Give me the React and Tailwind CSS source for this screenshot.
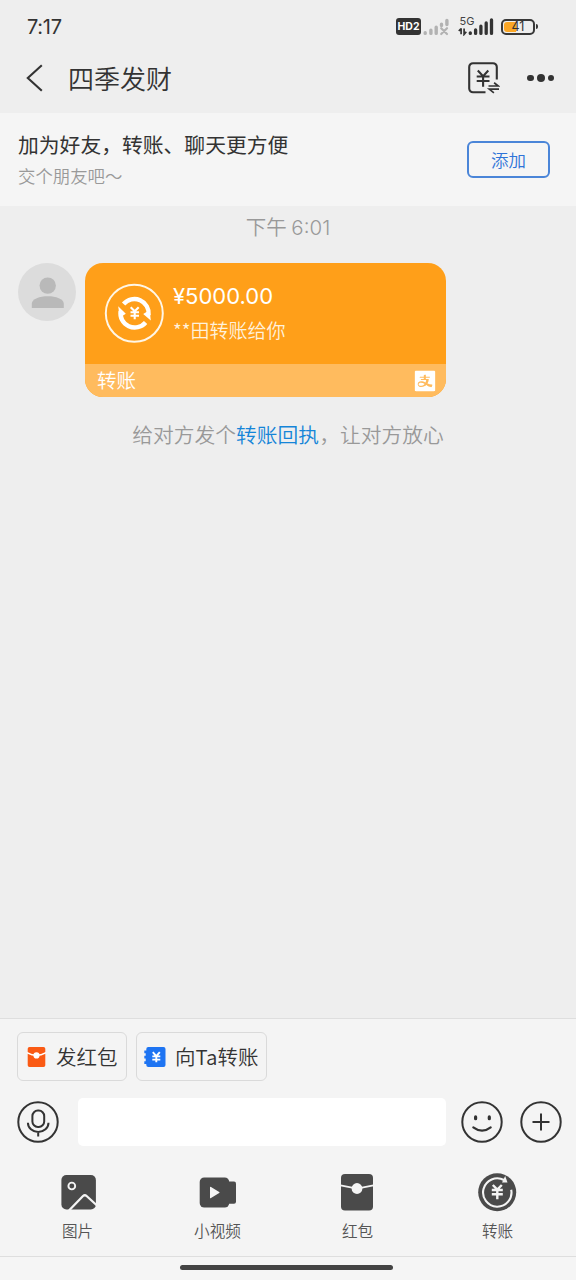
import { AiFillAlipaySquare } from 'react-icons/ai';

const QUICK_ACTIONS = [
  { key: 'redPacket', label: '发红包', icon: <RedPacketSmallIcon />, className: 'w-[110px] pl-[9px] gap-[10px]' },
  { key: 'transfer', label: '向Ta转账', icon: <TransferSmallIcon />, className: 'w-[131px] pl-[7px] gap-[9px]' },
];

const TOOLS = [
  { key: 'photo', label: '图片', icon: <PhotoIcon /> },
  { key: 'video', label: '小视频', icon: <VideoIcon /> },
  { key: 'redPacket', label: '红包', icon: <RedPacketIcon /> },
  { key: 'transfer', label: '转账', icon: <TransferIcon /> },
];

function SimMutedIcon() {
  return (
    <svg width="28" height="18" viewBox="0 0 28 18" stroke="#b2b2b2" strokeWidth="3.4" strokeLinecap="round" fill="none">
      <path d="M3.2 15.4v-.6M8.9 15.400v-3.200M14.200 15.400v-6.200M19.500 7.600V6.200M24.900 6.500V2.400" />
      <path d="M19.200 10.200l5.800 5.800M25 10.200l-5.800 5.800" strokeWidth="2.200" />
    </svg>
  );
}

function SignalIcon() {
  return (
    <div className="relative w-9 h-[22px]">
      <span className="absolute left-[1.5px] top-0 text-[11px] leading-[11px] text-[#444]">5G</span>
      <svg className="absolute left-0 top-[2px]" width="36" height="18" viewBox="0 0 36 18" stroke="#333" fill="none">
        <path d="M12.3 15.4v-.6M17.6 15.4v-3.5M22.9 15.4V8.2M28.2 15.4V5M33.5 15.4V1.9" strokeWidth="3.3" strokeLinecap="round" />
        <path d="M3.1 10.3v6M.8 13l2.3-2.5M6.1 10.600v5.800l2.200-2.600" strokeWidth="1.700" />
      </svg>
    </div>
  );
}

function Battery() {
  return (
    <div className="flex items-center gap-px">
      <div className="relative w-[34px] h-4 rounded-[5px] border-2 border-[#383838] p-px">
        <div className="w-[12px] h-full rounded-l-[3px] bg-[#fba726]" />
        <span className="absolute inset-0 text-center text-[12.500px] leading-3 text-[#333]">41</span>
      </div>
      <div className="w-0.5 h-[5px] rounded-r bg-[#383838]" />
    </div>
  );
}

function BackIcon() {
  return (
    <svg width="18" height="28" viewBox="0 0 18 28" fill="none" stroke="#333" strokeWidth="2.1">
      <path d="M15.8 1.2L1.8 14l14 12.8" />
    </svg>
  );
}

function BillIcon() {
  return (
    <svg width="32" height="33" viewBox="0 0 32 33" fill="none" stroke="#333" strokeWidth="2.1">
      <path d="M17.5 30.3H5a3.8 3.8 0 01-3.8-3.8V5A3.8 3.8 0 015 1.200h20A3.800 3.800 0 0128.800 5v12.500" />
      <path d="M9.800 8.500l5.300 5.600 5.200-5.600M8.700 14.500h12.800M8.700 19h12.800M15.100 14.500v10.300" />
      <path d="M20.500 24h9.800l-4.200-3.200M31 27.200h-9.700l4.600 3.600" strokeWidth="1.700" />
    </svg>
  );
}

function TransferBadge() {
  return (
    <svg width="60" height="60" viewBox="0 0 60 60" fill="none" stroke="#fff">
      <circle cx="30.300" cy="30.300" r="28.500" strokeWidth="2" stroke="#fff6e6" />
      <path d="M19.600 21A14.300 14.300 0 0144.600 32M41.600 39.500A14.300 14.300 0 0116.600 28" strokeWidth="4.400" />
      <path d="M14.200 23.200l7.600 7.600-6 4zM46.800 37.600l-7.600-6.600 6.500-4z" fill="#fff" stroke="none" />
      <path d="M26.700 24.300l4 4 4-4M26.500 29.200h8.500M26.500 32.700h8.500M30.700 28v8.300" strokeWidth="2.100" />
    </svg>
  );
}

function RedPacketSmallIcon() {
  return (
    <svg width="19" height="22" viewBox="0 0 19 22">
      <path d="M2.500 1h14A1.800 1.800 0 0118.300 2.800v16.400a1.800 1.800 0 01-1.800 1.800h-14A1.800 1.800 0 01.7 19.200V2.800A1.800 1.800 0 012.500 1z" fill="#fa5a14" />
      <path d="M0 6.600Q9.500 12.100 19 6.600" fill="none" stroke="#fff" strokeWidth="1.500" />
      <circle cx="9.500" cy="9.400" r="3.100" fill="#fff" />
    </svg>
  );
}

function TransferSmallIcon() {
  return (
    <svg width="22" height="22" viewBox="0 0 22 22">
      <path d="M4.300 1h15.200a2 2 0 012 2v16a2 2 0 01-2 2H4.300a2 2 0 01-2-2v-1H.3v-2.800h1.400v-2.600H.3V9.800h1.400V7.200H.3V4.400h2V3a2 2 0 012-2z" fill="#1e74f2" />
      <path d="M8.800 6.200l3.500 4 3.500-4M8.300 10.400h8M8.300 13.600h8M12.300 10v6.200" fill="none" stroke="#fff" strokeWidth="1.900" />
    </svg>
  );
}

function MicIcon() {
  return (
    <svg width="42" height="42" viewBox="0 0 42 42" fill="none" stroke="#333" strokeWidth="2">
      <circle cx="21" cy="21" r="19.700" />
      <rect x="15.400" y="9.600" width="11.800" height="16.300" rx="5.400" />
      <path d="M10.900 21.800a10.300 9.200 0 0020.600 0M21.200 31v4.500" />
    </svg>
  );
}

function SmileIcon() {
  return (
    <svg width="42" height="42" viewBox="0 0 42 42" fill="none" stroke="#333" strokeWidth="2" strokeLinecap="round">
      <circle cx="21" cy="21" r="19.700" />
      <path d="M14.600 15.900v1.800M28.300 15.900v1.800" strokeWidth="3.200" />
      <path d="M12.300 26.300q8.800 6.600 17.400 0" strokeWidth="2.200" />
    </svg>
  );
}

function PlusIcon() {
  return (
    <svg width="42" height="42" viewBox="0 0 42 42" fill="none" stroke="#333" strokeWidth="2">
      <circle cx="21" cy="21" r="19.700" />
      <path d="M21 12.500v17M12.500 21h17" />
    </svg>
  );
}

function PhotoIcon() {
  return (
    <svg width="40" height="40" viewBox="0 0 40 40">
      <rect x="3.400" y="3" width="34.500" height="34.500" rx="5" fill="#4a4a4a" />
      <circle cx="13.800" cy="14" r="3.400" fill="none" stroke="#f4f4f4" strokeWidth="1.900" />
      <path d="M11 38.500L25 24q1.800-1.600 3.600 0L39 33.500" fill="none" stroke="#f4f4f4" strokeWidth="2.300" />
    </svg>
  );
}

function VideoIcon() {
  return (
    <svg width="40" height="40" viewBox="0 0 40 40" fill="#4a4a4a">
      <rect x="1.700" y="5.500" width="29.500" height="30" rx="4.500" />
      <path d="M30 9.500h6a2 2 0 012 2v18.300a2 2 0 01-2 2h-6z" />
      <path d="M12 15.300v10.400q0 1 1 .4l8.200-5q.8-.6 0-1.200l-8.200-5q-1-.6-1 .4z" fill="#f4f4f4" />
    </svg>
  );
}

function RedPacketIcon() {
  return (
    <svg width="40" height="40" viewBox="0 0 40 40">
      <rect x="3" y="2" width="32" height="36.500" rx="4" fill="#4a4a4a" />
      <path d="M2.500 13.400L19 16.600l16.500-3.200" fill="none" stroke="#f4f4f4" strokeWidth="1.900" />
      <circle cx="19" cy="16.500" r="5.400" fill="#f4f4f4" />
    </svg>
  );
}

function TransferIcon() {
  return (
    <svg width="40" height="40" viewBox="0 0 40 40" fill="none" stroke="#f4f4f4">
      <circle cx="19.200" cy="20.300" r="19" fill="#4a4a4a" stroke="none" />
      <path d="M33.200 17.700A14.200 14.200 0 1126 8" strokeWidth="2.100" />
      <path d="M24 10.500l3.200-6.500 2.300 6.500z" fill="#f4f4f4" stroke="none" />
      <path d="M14.800 13l4.500 4.600 4.500-4.600M13.800 18h11M13.800 22.300h11M19.300 17.500v9.800" strokeWidth="2.400" />
    </svg>
  );
}

function StatusBar() {
  return (
    <div className="h-[46px] flex items-center justify-between pl-[27px] pr-[38px] pt-[7px] font-['Inter',sans-serif] font-normal">
      <span className="text-[20px] tracking-[-0.3px] text-[#333]">7:17</span>
      <div className="flex items-center">
        <span className="w-[25px] h-[17px] rounded-[3px] bg-[#333] text-white text-[10.500px] leading-[17px] font-bold text-center">HD2</span>
        <div className="ml-px"><SimMutedIcon /></div>
        <div className="ml-2"><SignalIcon /></div>
        <div className="ml-[7px]"><Battery /></div>
      </div>
    </div>
  );
}

function Header() {
  return (
    <header className="h-[67px] flex items-center pb-[3px] pl-[26px] pr-[22px]">
      <BackIcon />
      <h1 className="flex-1 -mt-px ml-6 text-[26px] leading-8 text-[#333]">四季发财</h1>
      <BillIcon />
      <div className="flex items-center gap-[3px] ml-[27px]">
        <span className="w-[6.500px] h-[6.500px] rounded-full bg-[#333]" />
        <span className="w-2 h-2 rounded-full bg-[#333]" />
        <span className="w-[6.500px] h-[6.500px] rounded-full bg-[#333]" />
      </div>
    </header>
  );
}

function AddFriendBar() {
  return (
    <section className="h-[93px] flex items-center justify-between pl-[18px] pr-[26px] bg-[#f5f5f5]">
      <div>
        <p className="text-[20.800px] leading-[32px] font-normal text-[#333]">加为好友，转账、聊天更方便</p>
        <p className="text-[17.400px] leading-[32px] text-[#999]">交个朋友吧～</p>
      </div>
      <button className="w-[83px] h-[37px] rounded-[6px] border-2 border-[#4a85d8] text-[17.500px] leading-none text-[#2e74d8]">
        添加
      </button>
    </section>
  );
}

function TransferCard() {
  return (
    <div className="w-[361px] h-[134px] flex flex-col rounded-[18px] overflow-hidden bg-[#ff9f19] text-white">
      <div className="flex-1 flex pl-[19px] pt-5">
        <TransferBadge />
        <div className="ml-[9px]">
          <p className="text-[22px] leading-[26px] font-['Inter',sans-serif] font-normal">¥5000.00</p>
          <p className="mt-[7px] text-[19px] leading-7 text-[#fff1dc]">**田转账给你</p>
        </div>
      </div>
      <div className="h-[33px] flex items-center justify-between pl-3 pr-[9px] bg-[#ffbb5e]">
        <span className="-mt-0.5 text-[19.500px] leading-none">转账</span>
        <AiFillAlipaySquare className="w-[26px] h-[26px] -mr-px" />
      </div>
    </div>
  );
}

function Chat() {
  return (
    <main className="flex-1">
      <p className="h-9 pt-1 text-center text-[20.500px] leading-8 text-[#999]">
        下午 <span className="font-['Inter',sans-serif]">6:01</span>
      </p>
      <div className="flex mt-[21px] pl-[18px] gap-[9px]">
        <div className="w-[58px] h-[58px] rounded-full bg-[#dcdcdc]">
          <svg width="58" height="58" viewBox="0 0 58 58" fill="#b9b9b9">
            <circle cx="29.700" cy="22.600" r="8.200" />
            <path d="M13.800 45v-4.200c0-10 32-10 32 0v4.200z" />
          </svg>
        </div>
        <TransferCard />
      </div>
      <p className="mt-[21px] text-center text-[20.750px] leading-8 text-[#999]">
        给对方发个<span className="text-[#1585d8]">转账回执</span>，让对方放心
      </p>
    </main>
  );
}

function Composer() {
  return (
    <footer className="h-[239px] border-y border-[#dedede] bg-[#f4f4f4]">
      <div className="flex gap-[9px] pt-[13px] pl-[17px]">
        {QUICK_ACTIONS.map(action => (
          <button
            key={action.key}
            className={`h-[49px] flex items-center rounded-[6px] border border-[#dadada] text-[20.500px] leading-none text-[#333] whitespace-nowrap ${action.className}`}
          >
            {action.icon}
            <span>{action.label}</span>
          </button>
        ))}
      </div>

      <div className="flex items-center mt-[17px] pl-[17px]">
        <MicIcon />
        <input type="text" aria-label="消息" className="w-[368px] h-12 ml-[19px] rounded-[5px] bg-white" />
        <div className="ml-[15px]"><SmileIcon /></div>
        <div className="ml-[16.500px]"><PlusIcon /></div>
      </div>

      <div className="grid grid-cols-4 mt-[26px] px-2">
        {TOOLS.map(tool => (
          <div key={tool.key} className="flex flex-col items-center">
            {tool.icon}
            <span className="mt-[6px] -ml-px text-[15.600px] leading-6 text-[#555]">{tool.label}</span>
          </div>
        ))}
      </div>
    </footer>
  );
}

function App() {
  return (
    <div className="w-[576px] h-[1280px] flex flex-col overflow-hidden bg-[#eeeeee] font-['Noto_Sans_CJK_SC',sans-serif] font-[350]">
      <StatusBar />
      <Header />
      <AddFriendBar />
      <Chat />
      <Composer />
      <div className="h-[23px] flex justify-center pt-2 pr-1 bg-[#f5f5f5]">
        <div className="w-[213px] h-[5px] rounded-full bg-[#444]" />
      </div>
    </div>
  );
}

export default App;
